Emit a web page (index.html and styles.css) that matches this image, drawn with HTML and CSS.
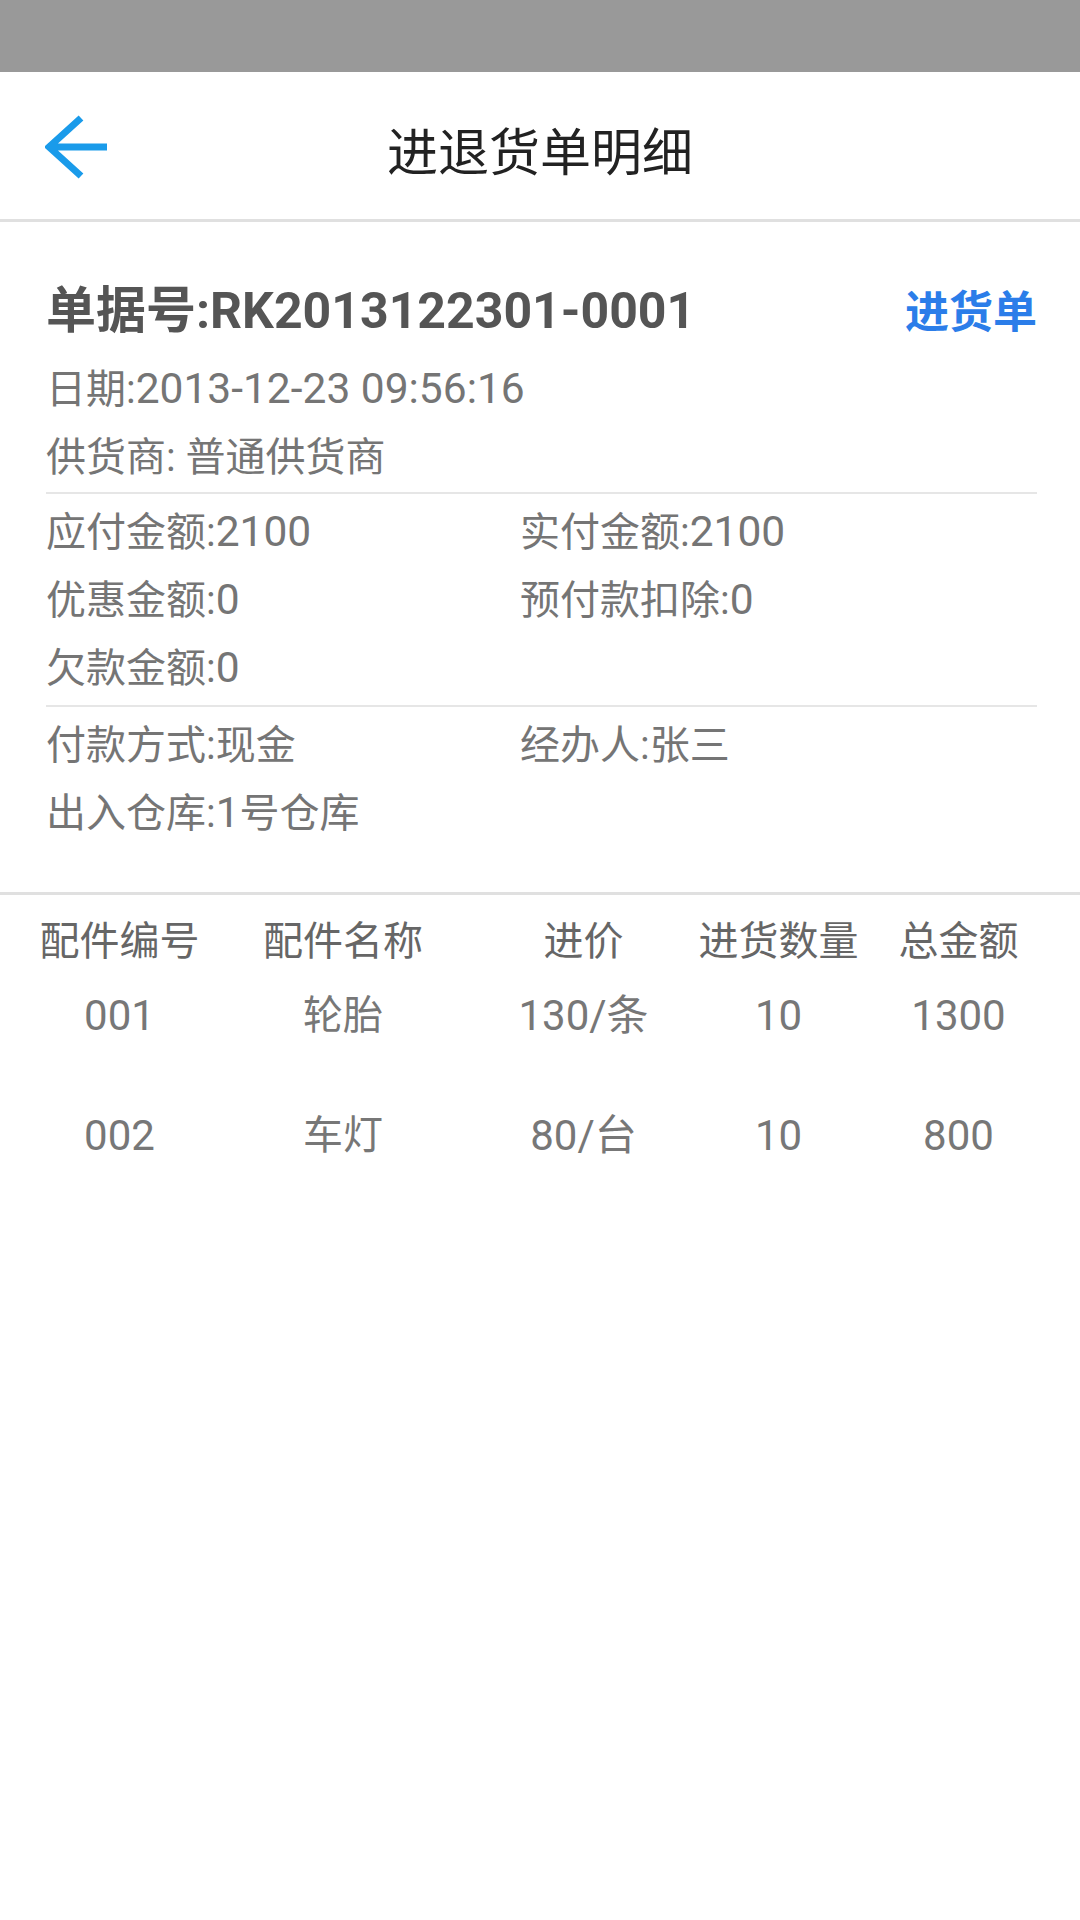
FILE: index.html
```html
<!DOCTYPE html>
<html lang="zh-CN">
<head>
  <meta charset="UTF-8" />
  <meta name="viewport" content="width=device-width, initial-scale=1.0"/>
  <title>进退货单明细</title>
  <link rel="stylesheet" href="styles.css">
</head>
<body>
  <div class="status-bar"></div>

  <div class="nav-bar">
    <a class="back" href="#">
      <svg width="62" height="64" viewBox="0 0 62 64">
        <path d="M36 3 L4 32 L36 61 M4 32 L62 32" fill="none" stroke="#1a9bea" stroke-width="7"/>
      </svg>
    </a>
    <h1 class="nav-title">进退货单明细</h1>
    <span></span>
  </div>

  <div class="order">
    <div class="order-head">
      <span class="order-no">单据号:RK2013122301-0001</span>
      <span class="order-type">进货单</span>
    </div>
    <div class="line">日期:<span class="num">2013-12-23 09:56:16</span></div>
    <div class="line">供货商: 普通供货商</div>

    <div class="group">
      <div class="line">应付金额:<span class="num">2100</span></div>
      <div class="line">实付金额:<span class="num">2100</span></div>
      <div class="line">优惠金额:<span class="num">0</span></div>
      <div class="line">预付款扣除:<span class="num">0</span></div>
      <div class="line">欠款金额:<span class="num">0</span></div>
    </div>

    <div class="group">
      <div class="line">付款方式:现金</div>
      <div class="line">经办人:张三</div>
      <div class="line">出入仓库:<span class="num">1</span>号仓库</div>
    </div>
  </div>

  <div class="parts">
    <div class="parts-row parts-header">
      <div class="cell">配件编号</div>
      <div class="cell">配件名称</div>
      <div class="cell">进价</div>
      <div class="cell">进货数量</div>
      <div class="cell">总金额</div>
    </div>
    <div class="parts-row">
      <div class="cell">001</div>
      <div class="cell cjk">轮胎</div>
      <div class="cell">130/条</div>
      <div class="cell">10</div>
      <div class="cell">1300</div>
    </div>
    <div class="parts-row">
      <div class="cell">002</div>
      <div class="cell cjk">车灯</div>
      <div class="cell">80/台</div>
      <div class="cell">10</div>
      <div class="cell">800</div>
    </div>
  </div>
</body>
</html>
```

FILE: styles.css
```css
body { margin: 0; background: #fff; font-family: Roboto, "Noto Sans CJK SC", sans-serif; }

.status-bar { height: 72px; background: #999; }

.nav-bar { height: 147px; border-bottom: 3px solid #e0e0e0; display: grid; grid-template-columns: 1fr auto 1fr; align-items: center; }
.back { display: flex; padding-left: 45px; margin-top: 2px; }
.nav-title { margin: 0; padding-top: 16px; font-size: 51px; font-weight: normal; color: #222; line-height: 70px; }

.order { padding: 0 43px 44px 46px; }
.order-head { display: flex; justify-content: space-between; align-items: baseline; margin-top: 54px; line-height: 70px; }
.order-no { font-size: 50px; font-weight: bold; color: #555; }
.order-type { font-size: 44px; font-weight: bold; color: #2b7de9; }

.line { font-size: 40px; line-height: 68px; color: #757575; }
.num { font-size: 42.5px; line-height: 1; }
.order-head + .line { margin-top: 8px; }

.group { border-top: 2px solid #e6e6e6; padding-top: 5px; display: grid; grid-template-columns: 474px 1fr; }
.group + .group { margin-top: 2px; }

.parts { border-top: 3px solid #e0e0e0; padding-top: 13px; }
.parts-row { display: grid; grid-template-columns: 239px 208px 273px 117px 243px; height: 120px; line-height: 80px; font-size: 42px; color: #777; }
.parts-header { height: 68px; line-height: 68px; font-size: 40px; color: #666; }
.cell { display: flex; justify-content: center; white-space: nowrap; }
.cell.cjk { font-size: 40px; }
```
